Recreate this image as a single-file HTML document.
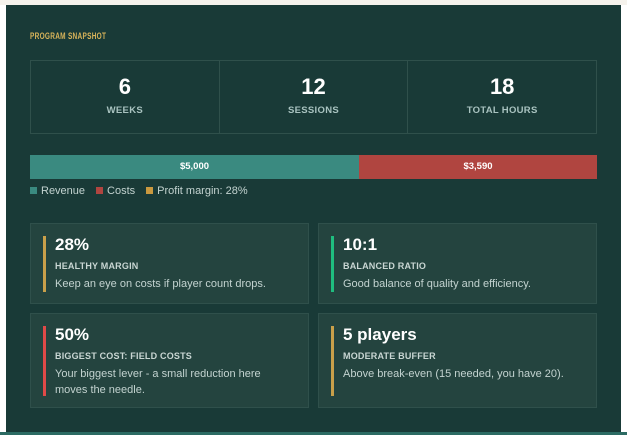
<!DOCTYPE html>
<html><head><style>
*{margin:0;padding:0;box-sizing:border-box}
body{width:627px;height:435px;background:#fff;position:relative;overflow:hidden;font-family:"Liberation Sans",sans-serif}
.top{position:absolute;left:0;top:0;width:627px;height:5px;background:#f5f2ec}
.panel{position:absolute;left:6px;top:5px;width:615px;height:427px;background:#193a37}
.bline{position:absolute;left:0;top:432px;width:627px;height:3px;background:#2c6b63}
.t{position:absolute}
.lbl{left:30px;top:31px;font-size:9px;font-weight:bold;color:#d9b45a;letter-spacing:0.4px;transform:scaleX(0.72);transform-origin:left}
.stats{position:absolute;left:30px;top:60px;width:567px;height:74px;border:1px solid #2f504b;display:flex}
.stats div{flex:1;text-align:center;border-right:1px solid #2f504b}
.stats div:last-child{border-right:none}
.stats b{display:block;font-size:22px;color:#fff;margin-top:14px;line-height:24px}
.stats span{display:block;font-size:9.5px;font-weight:bold;color:#a9c3c0;margin-top:6px;letter-spacing:0.3px}
.bar{position:absolute;top:155px;height:24px;color:#fff;font-size:9.5px;font-weight:bold;text-align:center;line-height:24px}
.leg{position:absolute;top:185px;left:30px;font-size:11px;color:#c3d3d0;display:flex;gap:11px}
.leg i{display:inline-block;width:7px;height:7px;margin-right:4px;vertical-align:0}
.card{position:absolute;background:#24443f;border:1px solid #2f504b}
.acc{position:absolute;left:12px;width:3px}
.card b{position:absolute;left:24px;color:#fff;font-size:17px}
.card h4{position:absolute;left:24px;font-size:9px;color:#c9d6d3;letter-spacing:0.2px}
.card p{position:absolute;left:24px;font-size:11px;color:#c3d3d0;line-height:16px;width:232px}
</style></head><body>
<div class="top"></div>
<div class="panel"></div>
<div class="bline"></div>
<div class="t lbl">PROGRAM SNAPSHOT</div>
<div class="stats">
<div><b>6</b><span>WEEKS</span></div>
<div><b>12</b><span>SESSIONS</span></div>
<div><b>18</b><span>TOTAL HOURS</span></div>
</div>
<div class="bar" style="left:30px;width:329px;background:#3a8a80">$5,000</div>
<div class="bar" style="left:359px;width:238px;background:#b04540">$3,590</div>
<div class="leg"><span><i style="background:#3a8a80"></i>Revenue</span><span><i style="background:#b04540"></i>Costs</span><span><i style="background:#c9993f"></i>Profit margin: 28%</span></div>

<div class="card" style="left:30px;top:223px;width:279px;height:81px">
<div class="acc" style="top:12px;height:56px;background:#c9a04a"></div>
<b style="top:11px">28%</b><h4 style="top:37px">HEALTHY MARGIN</h4><p style="top:52px">Keep an eye on costs if player count drops.</p></div>
<div class="card" style="left:318px;top:223px;width:279px;height:81px">
<div class="acc" style="top:12px;height:56px;background:#1fbd7f"></div>
<b style="top:11px">10:1</b><h4 style="top:37px">BALANCED RATIO</h4><p style="top:52px">Good balance of quality and efficiency.</p></div>
<div class="card" style="left:30px;top:313px;width:279px;height:95px">
<div class="acc" style="top:12px;height:70px;background:#e04a48"></div>
<b style="top:11px">50%</b><h4 style="top:37px">BIGGEST COST: FIELD COSTS</h4><p style="top:52px">Your biggest lever - a small reduction here moves the needle.</p></div>
<div class="card" style="left:318px;top:313px;width:279px;height:95px">
<div class="acc" style="top:12px;height:70px;background:#c9a04a"></div>
<b style="top:11px">5 players</b><h4 style="top:37px">MODERATE BUFFER</h4><p style="top:52px">Above break-even (15 needed, you have 20).</p></div>
</body></html>
